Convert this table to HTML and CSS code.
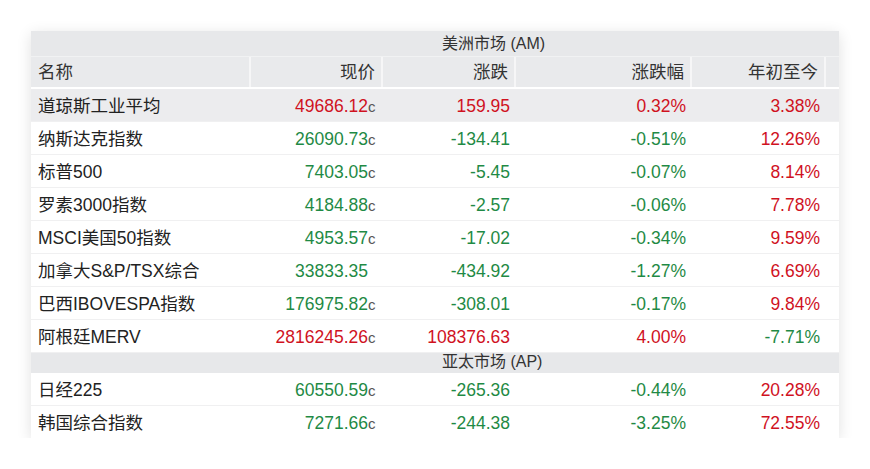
FILE: index.html
```html
<!DOCTYPE html>
<html lang="zh-CN">
<head>
<meta charset="utf-8">
<title>全球指数</title>
<link rel="stylesheet" href="styles.css">
</head>
<body>
<div class="page">
  <div class="card">
    <div class="section">美洲市场 (AM)</div>
    <div class="row head">
      <div class="cell name">名称</div>
      <div class="cell num">现价</div>
      <div class="cell num">涨跌</div>
      <div class="cell num">涨跌幅</div>
      <div class="cell num">年初至今</div>
      <div class="cell pad"></div>
    </div>
    <div class="row hl">
      <div class="cell name">道琼斯工业平均</div>
      <div class="cell num up">49686.12<span class="flag">c</span></div>
      <div class="cell num up">159.95</div>
      <div class="cell num up">0.32%</div>
      <div class="cell num up">3.38%</div>
      <div class="cell pad"></div>
    </div>
    <div class="row">
      <div class="cell name">纳斯达克指数</div>
      <div class="cell num down">26090.73<span class="flag">c</span></div>
      <div class="cell num down">-134.41</div>
      <div class="cell num down">-0.51%</div>
      <div class="cell num up">12.26%</div>
      <div class="cell pad"></div>
    </div>
    <div class="row">
      <div class="cell name">标普500</div>
      <div class="cell num down">7403.05<span class="flag">c</span></div>
      <div class="cell num down">-5.45</div>
      <div class="cell num down">-0.07%</div>
      <div class="cell num up">8.14%</div>
      <div class="cell pad"></div>
    </div>
    <div class="row">
      <div class="cell name">罗素3000指数</div>
      <div class="cell num down">4184.88<span class="flag">c</span></div>
      <div class="cell num down">-2.57</div>
      <div class="cell num down">-0.06%</div>
      <div class="cell num up">7.78%</div>
      <div class="cell pad"></div>
    </div>
    <div class="row">
      <div class="cell name">MSCI美国50指数</div>
      <div class="cell num down">4953.57<span class="flag">c</span></div>
      <div class="cell num down">-17.02</div>
      <div class="cell num down">-0.34%</div>
      <div class="cell num up">9.59%</div>
      <div class="cell pad"></div>
    </div>
    <div class="row">
      <div class="cell name">加拿大S&amp;P/TSX综合</div>
      <div class="cell num down">33833.35<span class="flag"></span></div>
      <div class="cell num down">-434.92</div>
      <div class="cell num down">-1.27%</div>
      <div class="cell num up">6.69%</div>
      <div class="cell pad"></div>
    </div>
    <div class="row">
      <div class="cell name">巴西IBOVESPA指数</div>
      <div class="cell num down">176975.82<span class="flag">c</span></div>
      <div class="cell num down">-308.01</div>
      <div class="cell num down">-0.17%</div>
      <div class="cell num up">9.84%</div>
      <div class="cell pad"></div>
    </div>
    <div class="row">
      <div class="cell name">阿根廷MERV</div>
      <div class="cell num up">2816245.26<span class="flag">c</span></div>
      <div class="cell num up">108376.63</div>
      <div class="cell num up">4.00%</div>
      <div class="cell num down">-7.71%</div>
      <div class="cell pad"></div>
    </div>
    <div class="section section2">亚太市场 (AP)</div>
    <div class="row">
      <div class="cell name">日经225</div>
      <div class="cell num down">60550.59<span class="flag">c</span></div>
      <div class="cell num down">-265.36</div>
      <div class="cell num down">-0.44%</div>
      <div class="cell num up">20.28%</div>
      <div class="cell pad"></div>
    </div>
    <div class="row last">
      <div class="cell name">韩国综合指数</div>
      <div class="cell num down">7271.66<span class="flag">c</span></div>
      <div class="cell num down">-244.38</div>
      <div class="cell num down">-3.25%</div>
      <div class="cell num up">72.55%</div>
      <div class="cell pad"></div>
    </div>
  </div>
</div>
</body>
</html>
```
FILE: styles.css
```css
html, body {
  margin: 0;
  padding: 0;
  background: #ffffff;
}
.page {
  padding: 31px 31px 0 31px;
  font-family: "Liberation Sans", "Noto Sans CJK SC", sans-serif;
  color: #222222;
}
.card {
  width: 808px;
  background: #ffffff;
  box-shadow: 0 3px 14px rgba(0, 0, 0, 0.12);
}
.section {
  height: 25px;
  line-height: 25px;
  background: #e7e8ea;
  border-bottom: 1px solid #f1f2f3;
  padding-left: 411px;
  font-size: 16px;
  color: #333333;
}
.section2 {
  height: 20px;
  line-height: 18px;
  padding-top: 0;
  border-bottom: none;
}
.row {
  display: grid;
  grid-template-columns: 220px 132px 133px 176px 134px 13px;
  height: 33px;
  box-sizing: border-box;
  padding-top: 2px;
  border-bottom: 1px solid #f0f0f1;
  font-size: 17.5px;
  line-height: 20px;
  align-items: center;
}
.row.head {
  height: 32px;
  padding-top: 0;
  background: #e9eaec;
  border-bottom: 2px solid #ffffff;
  color: #333333;
}
.row.head .cell {
  height: 100%;
  display: flex;
  align-items: center;
  justify-content: flex-end;
  box-sizing: border-box;
  border-right: 2px solid #f6f6f7;
}
.row.head .cell.name {
  justify-content: flex-start;
}
.row.head .cell.pad {
  border-right: none;
}
.row.hl {
  background: #ececee;
}
.row.last {
  height: 32px;
  border-bottom: none;
}
.cell {
  white-space: nowrap;
}
.name {
  padding-left: 7px;
}
.num {
  text-align: right;
  padding-right: 6px;
}
.flag {
  display: inline-block;
  width: 9px;
  font-size: 15px;
  color: #555555;
  text-align: left;
}
.up {
  color: #d0121f;
}
.down {
  color: #1f8a45;
}
```
